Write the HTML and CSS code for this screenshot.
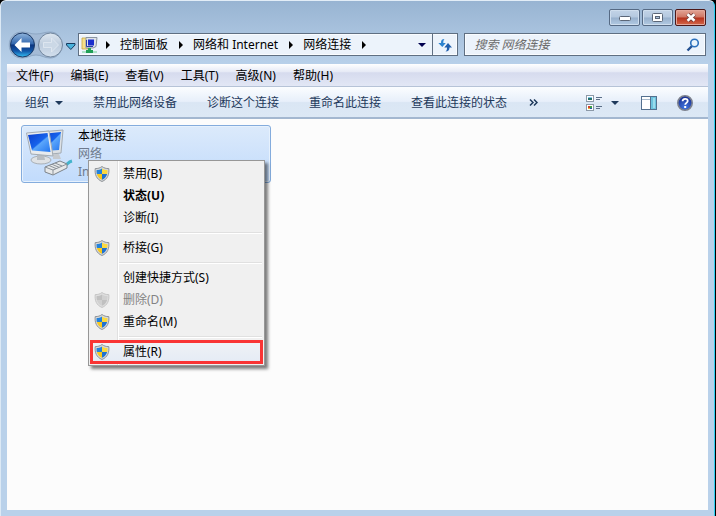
FILE: index.html
```html
<!DOCTYPE html>
<html lang="zh-CN">
<head>
    <meta charset="UTF-8">
    <meta name="viewport" content="width=device-width, initial-scale=1.0">
    <title>网络连接</title>
    <link rel="stylesheet" href="styles.css">
</head>
<body>
    <!-- shared gradients and the shield symbol -->
    <svg class="defs" width="0" height="0" aria-hidden="true">
        <defs>
            <linearGradient id="navBlue" x1="0" y1="0" x2="0" y2="1">
                <stop offset="0" stop-color="#8fb4dc"/>
                <stop offset=".45" stop-color="#3468ae"/>
                <stop offset=".5" stop-color="#0b3680"/>
                <stop offset=".75" stop-color="#1256a8"/>
                <stop offset="1" stop-color="#35c0f4"/>
            </linearGradient>
            <linearGradient id="navGrey" x1="0" y1="0" x2="0" y2="1">
                <stop offset="0" stop-color="#dfe8f1"/>
                <stop offset=".5" stop-color="#bccbdc"/>
                <stop offset="1" stop-color="#d3e0ee"/>
            </linearGradient>
            <linearGradient id="screen" x1="0" y1="0" x2="1" y2="1">
                <stop offset="0" stop-color="#0a3ccc"/>
                <stop offset=".5" stop-color="#1763ec"/>
                <stop offset=".55" stop-color="#5ba6fb"/>
                <stop offset="1" stop-color="#2476f0"/>
            </linearGradient>
            <radialGradient id="helpBlue" cx=".5" cy=".8" r=".8">
                <stop offset="0" stop-color="#4277e0"/>
                <stop offset="1" stop-color="#15298c"/>
            </radialGradient>
            <clipPath id="shieldClip">
                <path d="M8 2.500C6.500 3.600 4.500 4 2.600 4C2.300 8 3.400 11.700 8 13.800C12.600 11.700 13.700 8 13.400 4C11.500 4 9.500 3.600 8 2.500Z"/>
            </clipPath>
            <symbol id="shield" viewBox="0 0 16 16">
                <path d="M8 .5C6 2 4 2.600 1.200 2.600C.6 8.500 2.400 13.200 8 15.500C13.600 13.200 15.400 8.500 14.800 2.600C12 2.600 10 2 8 .5Z" fill="#d5d8da" stroke="#868a8e" stroke-width=".9"/>
                <g clip-path="url(#shieldClip)">
                    <path d="M0 0h8v8H0z" fill="#2482dc"/>
                    <path d="M8 0h8v8H8z" fill="#fbd93f"/>
                    <path d="M0 8h8v8H0z" fill="#f9c91c"/>
                    <path d="M8 8h8v8H8z" fill="#1f72d0"/>
                </g>
            </symbol>
            <symbol id="shieldOff" viewBox="0 0 16 16">
                <path d="M8 .5C6 2 4 2.600 1.200 2.600C.6 8.500 2.400 13.200 8 15.500C13.600 13.200 15.400 8.500 14.800 2.600C12 2.600 10 2 8 .5Z" fill="#dedede" stroke="#c2c2c2" stroke-width=".9"/>
                <g clip-path="url(#shieldClip)">
                    <path d="M0 0h8v8H0zM8 8h8v8H8z" fill="#c0c0c0"/>
                    <path d="M8 0h8v8H8zM0 8h8v8H0z" fill="#d0d0d0"/>
                </g>
            </symbol>
        </defs>
    </svg>

    <div class="window">
        <header class="titlebar">
            <button type="button" class="caption" aria-label="最小化">
                <svg width="12" height="6" viewBox="0 0 12 6"><rect x=".5" y="1.500" width="11" height="4" rx="1" fill="#fff" stroke="#5b6677"/></svg>
            </button>
            <button type="button" class="caption" aria-label="最大化">
                <svg width="11" height="9" viewBox="0 0 11 9"><rect x=".5" y=".5" width="10" height="8" rx="1" fill="#fff" stroke="#5b6677"/><rect x="3.500" y="3.500" width="4" height="2" fill="#a9c0da" stroke="#5b6677"/></svg>
            </button>
            <button type="button" class="caption close" aria-label="关闭">
                <svg width="14" height="11" viewBox="0 0 14 11"><path d="M3.500 2.300l7 6.400M10.500 2.300l-7 6.400" stroke="#6d3936" stroke-width="4.200"/><path d="M3.500 2.300l7 6.400M10.500 2.300l-7 6.400" stroke="#fff" stroke-width="2.600"/></svg>
            </button>
        </header>

        <div class="address-row">
            <div class="nav">
                <svg width="70" height="28" viewBox="0 0 70 28">
                    <path d="M14 1C20 1 22 3 28 3C34 3 36 1 42 1C58 1 58 27 42 27C36 27 34 24 28 24C22 24 20 27 14 27C-3 27 -3 1 14 1Z" fill="#a4bbd6" stroke="#8ea7c4"/>
                    <circle cx="14.500" cy="14" r="12" fill="url(#navBlue)" stroke="#1d3a66"/>
                    <path d="M6.500 14l7-7v4.500h8.500v5h-8.500V21z" fill="#fff"/>
                    <circle cx="42.500" cy="14" r="12" fill="url(#navGrey)" stroke="#71869e"/>
                    <path d="M50.500 14l-7-7v4.500h-8v5h8V21z" fill="#cbd8e6" stroke="#e2eaf3" stroke-width=".8"/>
                    <path d="M58.500 12.500h8.500v1.500L62.800 18.500L58.500 14z" fill="#49b2dc" stroke="#173c60"/>
                </svg>
            </div>
            <nav class="address" aria-label="地址">
                <svg class="place" width="18" height="18" viewBox="0 0 18 18">
                    <path d="M1 2h5l1 1v10H1z" fill="#f5e08a" stroke="#c9a63c" stroke-width=".8"/>
                    <path d="M5 1.500h11l-1 9l-3 1.500H5z" fill="#dfe3e8" stroke="#8a94a0"/>
                    <rect x="7" y="3.500" width="6" height="6" fill="#1b2fcc"/>
                    <path d="M5.500 4v6.500H12" fill="none" stroke="#2a3ea8"/>
                    <path d="M7 12h3v3H7z" fill="#27a758"/>
                    <path d="M1 16h15" stroke="#6fcf97" stroke-width="1"/>
                    <path d="M5 15.500h7" stroke="#1f9e55" stroke-width="3"/>
                </svg>
                <span class="crumb-arrow"></span>
                <a href="#">控制面板</a>
                <span class="crumb-arrow"></span>
                <a href="#">网络和 Internet</a>
                <span class="crumb-arrow"></span>
                <a href="#">网络连接</a>
                <span class="crumb-arrow"></span>
                <button type="button" class="history" aria-label="历史记录"><span class="down"></span></button>
                <button type="button" class="refresh" aria-label="刷新">
                    <svg width="14" height="14" viewBox="0 0 14 14">
                        <path d="M6.500 1C3.700 1 3 2.500 3 5H.3L4.300 9L7.800 5H5.300C5.300 3 5.500 2 6.500 1Z" fill="#2c83cf"/>
                        <path d="M7.500 13.500C10.300 13.500 11.500 12 11.500 9.500H14L10 5L6.300 9.500H9C9 11.500 8.800 12.500 7.500 13.500Z" fill="#205fae"/>
                    </svg>
                </button>
            </nav>
            <form class="search">
                <input type="text" placeholder="搜索 网络连接" aria-label="搜索 网络连接">
                <svg width="14" height="14" viewBox="0 0 14 14">
                    <path d="M1.500 12.500L6 8" stroke="#234f91" stroke-width="2.400"/>
                    <circle cx="8.500" cy="5" r="3.800" fill="#e9f4fc" stroke="#2c71bd" stroke-width="1.600"/>
                </svg>
            </form>
        </div>

        <div class="menubar">
            <button type="button">文件(F)</button>
            <button type="button">编辑(E)</button>
            <button type="button">查看(V)</button>
            <button type="button">工具(T)</button>
            <button type="button">高级(N)</button>
            <button type="button">帮助(H)</button>
        </div>

        <div class="toolbar">
            <button type="button">组织<span class="down"></span></button>
            <button type="button">禁用此网络设备</button>
            <button type="button">诊断这个连接</button>
            <button type="button">重命名此连接</button>
            <button type="button">查看此连接的状态</button>
            <button type="button" class="more" aria-label="更多">
                <svg width="9" height="7" viewBox="0 0 9 7"><path d="M1 .5l3 3l-3 3M5 .5l3 3l-3 3" fill="none" stroke="#1e395b" stroke-width="1.500"/></svg>
            </button>
            <div class="tools">
                <button type="button" aria-label="更改视图">
                    <svg width="16" height="16" viewBox="0 0 16 16">
                        <rect x=".5" y=".5" width="7" height="6" fill="#fff" stroke="#8c99a8"/>
                        <path d="M2 2h4v1H2z" fill="#7fc9ec"/><path d="M2 3h4v2H2z" fill="#28706b"/>
                        <rect x=".5" y="9.500" width="7" height="6" fill="#fff" stroke="#8c99a8"/>
                        <path d="M2 11h2v2H2z" fill="#d43f2d"/><path d="M4 11h2v2H4z" fill="#3aa047"/><path d="M2 13h2v1H2z" fill="#e2b72e"/><path d="M4 13h2v1H4z" fill="#2a56b0"/>
                        <path d="M10 2.500h6M10 4.500h4M10 11.500h6M10 13.500h4" stroke="#5b6f88"/>
                    </svg>
                    <span class="down"></span>
                </button>
                <button type="button" aria-label="预览窗格">
                    <svg width="16" height="14" viewBox="0 0 16 14">
                        <rect x=".5" y=".5" width="15" height="13" fill="#fff" stroke="#53708f"/>
                        <path d="M1 3.500h9" stroke="#a7b9cc"/>
                        <path d="M10 1h5v12h-5z" fill="#6cc3de"/><path d="M9.500 1v12" stroke="#53708f"/><path d="M12 2h2v10h-2z" fill="#9adbec"/>
                    </svg>
                </button>
                <button type="button" class="help" aria-label="帮助">
                    <svg width="16" height="16" viewBox="0 0 16 16">
                        <circle cx="8" cy="8" r="7.200" fill="url(#helpBlue)" stroke="#7d828e" stroke-width="1.600"/>
                        <path d="M5.600 6.300C5.600 3 10.700 3 10.700 6C10.700 7.900 8.200 7.900 8.200 9.800" fill="none" stroke="#fff" stroke-width="1.800"/>
                        <path d="M7.200 11h2v2h-2z" fill="#fff"/>
                    </svg>
                </button>
            </div>
        </div>

        <main class="content">
            <div class="connection">
                <svg width="48" height="50" viewBox="0 0 48 50">
                    <path d="M14 5L37 3L35 26L16 28Z" fill="#dde1e5" stroke="#a3abb3"/>
                    <path d="M16 7L35 5L33 23L18 24Z" fill="url(#screen)"/>
                    <path d="M27 27h6l2 5h-8z" fill="#c6cacf"/>
                    <ellipse cx="15" cy="33" rx="10" ry="4" fill="#dfe2e5" stroke="#a9b0b6"/>
                    <path d="M11 28h7l1 5h-8z" fill="#b8bdc2"/>
                    <path d="M.5 6L23 4L27 29L5 27Z" fill="#e8ebee" stroke="#a3abb3"/>
                    <path d="M2 8L21.500 6L24.500 25L6 23.500Z" fill="url(#screen)"/>
                    <path d="M38 39C41 38 42 35 46 34" fill="none" stroke="#43b4cc" stroke-width="3"/>
                    <path d="M19 40L34 34L41 37V41L27 48L19 45Z" fill="#e6e8e9" stroke="#7c838a"/>
                    <path d="M19 40L27 43L41 37M27 43V48M23 38.500l7 3M26 37.300l7 3M29 36l7 3" fill="none" stroke="#8b9299"/>
                </svg>
                <div class="info">
                    <span class="name">本地连接</span>
                    <span>网络</span>
                    <span>Intel</span>
                </div>

                <div class="context-menu">
                    <button type="button"><svg class="icon"><use href="#shield"/></svg>禁用(B)</button>
                    <button type="button" class="default">状态(U)</button>
                    <button type="button">诊断(I)</button>
                    <hr>
                    <button type="button"><svg class="icon"><use href="#shield"/></svg>桥接(G)</button>
                    <hr>
                    <button type="button">创建快捷方式(S)</button>
                    <button type="button" disabled><svg class="icon"><use href="#shieldOff"/></svg>删除(D)</button>
                    <button type="button"><svg class="icon"><use href="#shield"/></svg>重命名(M)</button>
                    <hr>
                    <button type="button" class="marked"><svg class="icon"><use href="#shield"/></svg>属性(R)</button>
                </div>
            </div>
        </main>
    </div>
</body>
</html>
```
FILE: styles.css
```css
* {
    box-sizing: border-box;
}
body {
    margin: 0;
    background-color: #000;
    color: #000;
    font-family: "Noto Sans", "Noto Sans CJK SC", sans-serif;
    font-size: 12px;
    line-height: 18px;
}
button, input {
    font: inherit;
    color: inherit;
    background: none;
    border: none;
    padding: 0;
    margin: 0;
    white-space: nowrap;
}
svg {
    display: block;
    flex: none;
}
a {
    color: inherit;
    text-decoration: none;
}
.defs {
    position: absolute;
}
.window {
    display: flex;
    flex-direction: column;
    min-height: 100vh;
    margin-right: 1px;
    padding: 0 6px 6px;
    border-top: 1px solid #e2edf7;
    border-left: 1px solid #dce9f5;
    border-right: 1px solid #2fd0f2;
    border-radius: 6px 6px 0 0;
    background: #b9d1ea linear-gradient(#98b4d2, #b9d1ea 64px) no-repeat;
}

/* caption buttons */
.titlebar {
    display: flex;
    justify-content: flex-end;
    gap: 2px;
    padding: 8px 2px 7px;
}
.caption {
    display: flex;
    align-items: center;
    justify-content: center;
    width: 31px;
    height: 17px;
    border: 1px solid #566a84;
    border-radius: 2px;
    background: linear-gradient(#c3d4e7, #b4c8df 48%, #97b0cc 52%, #b2cae3);
    box-shadow: inset 0 0 0 1px #cfdeee;
}
.caption.close {
    border-color: #4c1818;
    background: linear-gradient(#e2a596, #cf7664 48%, #b5311c 52%, #d5684a);
    box-shadow: inset 0 0 0 1px #e3a79b;
}

/* address and search */
.address-row {
    display: flex;
    align-items: center;
    padding: 0 2px 0 1px;
    margin-bottom: 8px;
}
.nav {
    width: 70px;
    margin: -3px 0;
}
.address, .search {
    display: flex;
    align-items: center;
    height: 23px;
    border: 1px solid #5f6f82;
    background-color: #ecf3fb;
    box-shadow: inset 0 0 0 1px #f9fcff;
}
.address {
    flex: 377;
    padding-left: 2px;
}
.place {
    margin-right: -4px;
}
.crumb-arrow {
    margin: 0 10px 0 11px;
    border: 4px solid transparent;
    border-left-color: #000;
    border-right-width: 0;
}
.history {
    margin-left: auto;
    padding: 0 6px;
}
.down {
    display: block;
    border: 4px solid transparent;
    border-top-color: #1e395b;
    border-bottom-width: 0;
}
.history .down {
    border-top-color: #00004f;
}
.refresh {
    display: flex;
    align-items: center;
    justify-content: center;
    width: 25px;
    height: 21px;
    border-left: 1px solid #5f6f82;
}
.search {
    flex: 226;
    margin-left: 6px;
    padding: 0 5px 0 9px;
}
.search input {
    flex: 1;
    min-width: 0;
    outline: none;
    font-style: italic;
}
.search input::placeholder {
    color: #6d6d6d;
}

.menubar {
    display: flex;
    align-items: center;
    gap: 17px;
    height: 23px;
    padding: 2px 0 0 9px;
    background: linear-gradient(#fff, #e6eaf6 35%, #d6dbee 40%, #e2e7f5);
    border-bottom: 1px solid #b6c3d7;
}
.toolbar {
    display: flex;
    align-items: center;
    gap: 30px;
    height: 32px;
    padding: 1px 15px 0 18px;
    color: #1e395b;
    background: linear-gradient(#fbfdff, #e7effa 48%, #dae6f4 52%, #dce8f5);
    border-bottom: 2px solid #a3b7d0;
}
.toolbar button {
    display: flex;
    align-items: center;
    gap: 6px;
}
.toolbar .more {
    margin-left: -8px;
}
.tools {
    display: flex;
    align-items: center;
    gap: 20px;
    margin-left: auto;
}
.tools button:first-child {
    gap: 9px;
    margin-right: 2px;
}

.content {
    flex: 1;
    padding: 6px 14px;
    background-color: #fcfcfc;
}
.connection {
    position: relative;
    display: flex;
    gap: 4px;
    width: 250px;
    height: 58px;
    padding: 1px 4px;
    border: 1px solid #84acdd;
    border-radius: 3px;
    background: linear-gradient(#dceafb, #c1dbfc);
    box-shadow: inset 0 0 0 1px #e6f1fd;
}
.info {
    display: flex;
    flex-direction: column;
    white-space: nowrap;
    color: #6d7a8c;
}
.info .name {
    color: #000;
}

/* menu opened over the connection */
.context-menu {
    position: absolute;
    left: 66px;
    top: 34px;
    width: 177px;
    padding: 2px;
    border: 1px solid #979797;
    background: linear-gradient(90deg, #f0f0f0 28px, #e0e0e0 28px, #e0e0e0 29px, #fff 29px, #fff 30px, #f0f0f0 30px);
    box-shadow: 3px 3px 3px rgba(0, 0, 0, 0.5);
}
.context-menu button {
    position: relative;
    display: block;
    width: 100%;
    height: 22px;
    padding-left: 32px;
    text-align: left;
}
.context-menu .default {
    font-weight: bold;
}
.context-menu button:disabled {
    color: #838383;
}
.context-menu hr {
    height: 2px;
    margin: 3px 0 3px 28px;
    border: none;
    border-top: 1px solid #e0e0e0;
    background-color: #fff;
}
.context-menu .icon {
    position: absolute;
    left: 3px;
    top: 3px;
    width: 16px;
    height: 16px;
}
.context-menu .marked {
    background: linear-gradient(#f0f2f5, #e4ebf5);
    outline: 3px solid #f93434;
    outline-offset: -2px;
}
```
